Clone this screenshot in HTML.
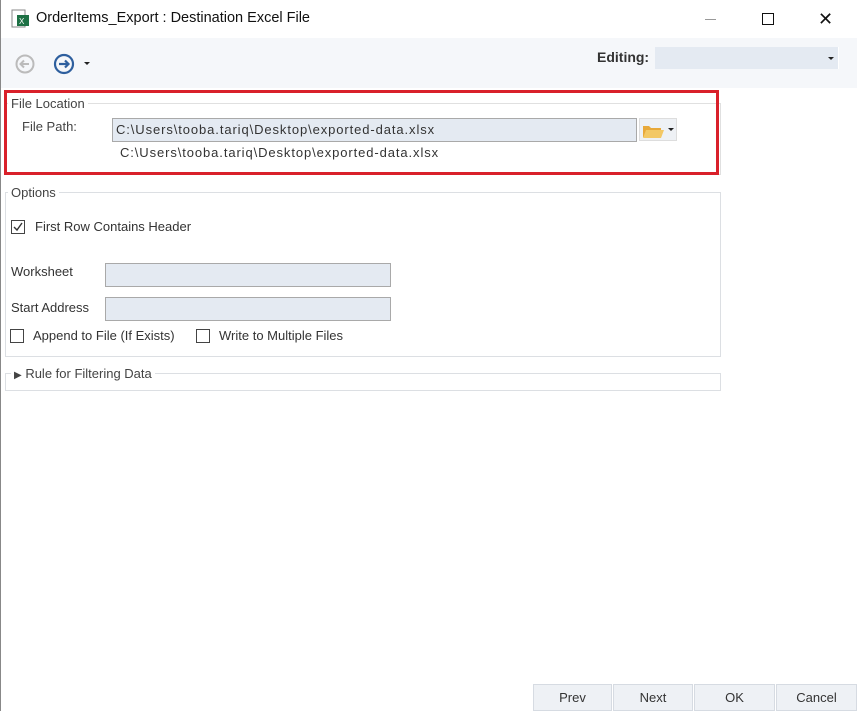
<!DOCTYPE html><html><head><style>
body{margin:0;width:857px;height:711px;position:relative;background:#fff;font-family:"Liberation Sans",sans-serif;font-size:13px;color:#333;overflow:hidden}
.a{position:absolute}
.box{position:absolute;border:1px solid #dcdfe3}
.lg{position:absolute;background:#fff;padding:0 3px;color:#444}
.inp{position:absolute;background:#e4eaf2;border:1px solid #a9a9a9}
.cb{position:absolute;width:12px;height:12px;border:1px solid #444;background:#fff}
.btn{position:absolute;top:684px;height:27px;background:#eef1f5;border:1px solid #d6dbe2;box-sizing:border-box;text-align:center;line-height:26px;font-size:13px;color:#333}
.p{letter-spacing:0.9px}
</style></head><body>
<div class="a" style="left:0;top:0;width:1px;height:711px;background:#888"></div>
<svg class="a" style="left:11px;top:9px" width="20" height="20"><rect x="1" y="1" width="13" height="17" fill="#fff" stroke="#888"/><rect x="6" y="6" width="12" height="11" fill="#1e7145"/><text x="8" y="15" font-size="8" fill="#fff" font-family="Liberation Sans">X</text></svg>
<div class="a" style="left:36px;top:10px;font-size:14.5px;color:#111">OrderItems_Export : Destination Excel File</div>
<div class="a" style="left:705px;top:19px;width:11px;height:1px;background:#999"></div>
<div class="a" style="left:762px;top:13px;width:10px;height:10px;border:1px solid #111"></div>
<div class="a" style="left:818px;top:9px;font-size:18px;color:#111">✕</div>
<div class="a" style="left:1px;top:38px;width:856px;height:50px;background:#f5f7fa"></div>
<svg class="a" style="left:14px;top:53px" width="22" height="22"><circle cx="11" cy="11" r="8.5" fill="none" stroke="#bbb" stroke-width="2"/><path d="M15 11H7M10 7.5L6.5 11 10 14.5" fill="none" stroke="#bbb" stroke-width="2"/></svg>
<svg class="a" style="left:52px;top:52px" width="24" height="24"><circle cx="12" cy="12" r="9" fill="none" stroke="#2e5f9e" stroke-width="2.2"/><path d="M7 12h9M13 8.5l3.5 3.5-3.5 3.5" fill="none" stroke="#2e5f9e" stroke-width="2.2"/></svg>
<div class="a" style="left:84px;top:62px;border-left:3px solid transparent;border-right:3px solid transparent;border-top:3px solid #222"></div>
<div class="a" style="left:597px;top:49px;font-size:14px;font-weight:bold;color:#333">Editing:</div>
<div class="a" style="left:655px;top:47px;width:183px;height:22px;background:#e4eaf2;border-right:1px solid #fff"></div>
<div class="a" style="left:828px;top:57px;border-left:3px solid transparent;border-right:3px solid transparent;border-top:3px solid #222"></div>
<div class="box" style="left:6px;top:103px;width:713px;height:70px;border-color:#e0e0e0"></div>
<div class="lg" style="left:8px;top:96px;">File Location</div>
<div class="a" style="left:4px;top:90px;width:709px;height:79px;border:3px solid #d9202a"></div>
<div class="a" style="left:22px;top:119px;color:#444">File Path:</div>
<div class="inp p" style="left:112px;top:118px;height:22px;line-height:22px;padding-left:3px;width:520px;color:#333">C:\Users\tooba.tariq\Desktop\exported-data.xlsx</div>
<div class="a" style="left:639px;top:118px;width:38px;height:23px;background:#eef1f5;border:1px solid #ddd;box-sizing:border-box"></div>
<svg class="a" style="left:641px;top:121px" width="26" height="18"><path d="M2 5h6l2 2h10v9H2z" fill="#e8a93a"/><path d="M5 9h18l-3 8H2z" fill="#f3c865"/></svg>
<div class="a" style="left:668px;top:128px;border-left:3px solid transparent;border-right:3px solid transparent;border-top:3px solid #222"></div>
<div class="a p" style="left:120px;top:145px;color:#333">C:\Users\tooba.tariq\Desktop\exported-data.xlsx</div>
<div class="box" style="left:5px;top:192px;width:714px;height:163px"></div>
<div class="lg" style="left:8px;top:185px;">Options</div>
<div class="cb" style="left:11px;top:220px"></div>
<svg class="a" style="left:12px;top:221px" width="12" height="12"><path d="M2 6l3 3 5-7" fill="none" stroke="#333" stroke-width="1.4"/></svg>
<div class="a" style="left:35px;top:219px">First Row Contains Header</div>
<div class="a" style="left:11px;top:264px">Worksheet</div>
<div class="inp" style="left:105px;top:263px;width:284px;height:22px"></div>
<div class="a" style="left:11px;top:300px">Start Address</div>
<div class="inp" style="left:105px;top:297px;width:284px;height:22px"></div>
<div class="cb" style="left:10px;top:329px"></div>
<div class="a" style="left:33px;top:328px">Append to File (If Exists)</div>
<div class="cb" style="left:196px;top:329px"></div>
<div class="a" style="left:219px;top:328px">Write to Multiple Files</div>
<div class="box" style="left:5px;top:373px;width:714px;height:16px"></div>
<div class="lg" style="left:11px;top:366px;"><span style="font-size:10px">&#9654;</span> Rule for Filtering Data</div>
<div class="btn" style="left:533px;width:79px">Prev</div>
<div class="btn" style="left:613px;width:80px">Next</div>
<div class="btn" style="left:694px;width:81px">OK</div>
<div class="btn" style="left:776px;width:81px">Cancel</div>
</body></html>
